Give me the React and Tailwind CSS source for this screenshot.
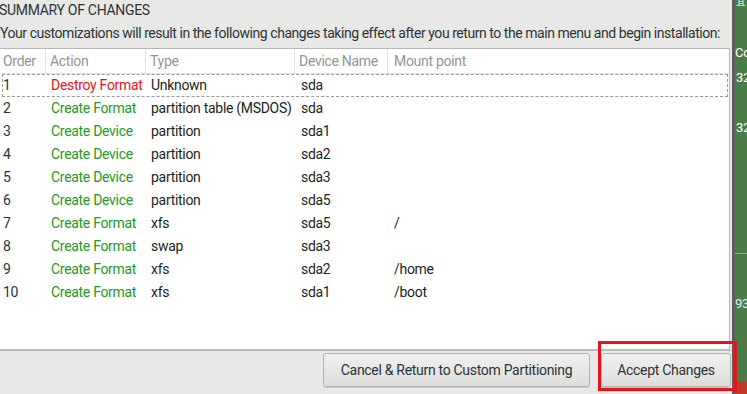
import React from "react";

const rows = [
  ["1", "Destroy Format", "Unknown", "sda", "", true],
  ["2", "Create Format", "partition table (MSDOS)", "sda", ""],
  ["3", "Create Device", "partition", "sda1", ""],
  ["4", "Create Device", "partition", "sda2", ""],
  ["5", "Create Device", "partition", "sda3", ""],
  ["6", "Create Device", "partition", "sda5", ""],
  ["7", "Create Format", "xfs", "sda5", "/"],
  ["8", "Create Format", "swap", "sda3", ""],
  ["9", "Create Format", "xfs", "sda2", "/home"],
  ["10", "Create Format", "xfs", "sda1", "/boot"],
];

export default function App() {
  return (
    <div
      className="w-[747px] h-[394px] flex overflow-hidden text-[#2e3436] relative tracking-[-0.3px]"
      style={{ fontFamily: 'Roboto, "Noto Sans", sans-serif' }}
    >
      <div className="w-[732px] h-full bg-[#e8e8e7] flex flex-col">
        <div className="h-[23px] -ml-[1px] pt-[1px] text-[14px] leading-[19px]">
          SUMMARY OF CHANGES
        </div>
        <div className="h-[25px] text-[14px] leading-[21px] whitespace-nowrap tracking-[-0.45px]">
          Your customizations will result in the following changes taking effect after you return to the main menu and begin installation:
        </div>
        <div className="w-[730px] h-[302px] bg-white border border-[#b7b7b4] border-l-0 flex flex-col">
          <div className="h-[25px] flex text-[14px] text-[#929595] border-b border-[#e4e4e2]">
            <div className="w-[46px] pl-[3px] leading-[24px] border-r border-[#e4e4e2]">Order</div>
            <div className="w-[100px] pl-[4px] leading-[24px] border-r border-[#e4e4e2]">Action</div>
            <div className="w-[149px] pl-[4px] leading-[24px] border-r border-[#e4e4e2]">Type</div>
            <div className="w-[93px] pl-[4px] leading-[24px] border-r border-[#e4e4e2] whitespace-nowrap">Device Name</div>
            <div className="flex-1 pl-[6px] leading-[24px]">Mount point</div>
          </div>
          <div className="flex flex-col">
            {rows.map((r) => (
              <div
                key={r[0]}
                className={
                  "h-[23px] flex text-[14px] leading-[21px] mx-[2px] w-[726px] " +
                  (r[5] ? "border border-dashed border-[#9a9a9a]" : "border border-transparent")
                }
              >
                <div className="w-[46px] pl-[0px] text-[#2e3436]">{r[0]}</div>
                <div className={"w-[100px] pl-[2px] whitespace-nowrap " + (r[5] ? "text-[#f01010]" : "text-[#239a23]")}>
                  {r[1]}
                </div>
                <div className="w-[149px] pl-[2px] whitespace-nowrap text-[#1c1f20]">{r[2]}</div>
                <div className="w-[93px] pl-[3px] text-[#1c1f20]">{r[3]}</div>
                <div className="flex-1 pl-[3px] text-[#1c1f20]">{r[4]}</div>
              </div>
            ))}
          </div>
        </div>
        <div className="flex-1 border-t border-[#bdbdba] flex justify-end items-start pt-[2px] pr-[1px] gap-[11px]">
          <button className="w-[267px] h-[34px] rounded-[3px] border border-[#b2b2ae] bg-gradient-to-b from-[#f0f0ef] to-[#dededc] text-[14px] text-[#2e3436] shadow-[0_1px_0_#c8c8c5]">
            Cancel &amp; Return to Custom Partitioning
          </button>
          <button className="w-[130px] h-[34px] rounded-[3px] border border-[#b2b2ae] bg-gradient-to-b from-[#f0f0ef] to-[#dededc] text-[14px] text-[#2e3436] shadow-[0_1px_0_#c8c8c5]">
            Accept Changes
          </button>
        </div>
      </div>
      <div className="w-[3px] h-full bg-[#5b5d5a]"></div>
      <div className="flex-1 h-full bg-[#4b7b46] relative text-white text-[13px] leading-none overflow-hidden">
        <div className="absolute left-[1px] top-[-3px] text-[10px]">宜</div>
        <div className="absolute left-0 top-[46px]">Co</div>
        <div className="absolute left-[1px] top-[71px]">32</div>
        <div className="absolute left-[1px] top-[121px]">32</div>
        <div className="absolute left-0 top-[253px] w-full h-[1px] bg-[#8fb08a]"></div>
        <div className="absolute left-0 top-[297px] text-[#e8e8e8]">93</div>
        <div className="absolute left-0 top-[381px] w-full h-[13px] bg-[#c0392b]"></div>
      </div>
      <div className="absolute left-[598px] top-[341px] w-[139px] h-[50px] border-[3px] border-[#e3141c]"></div>
    </div>
  );
}
